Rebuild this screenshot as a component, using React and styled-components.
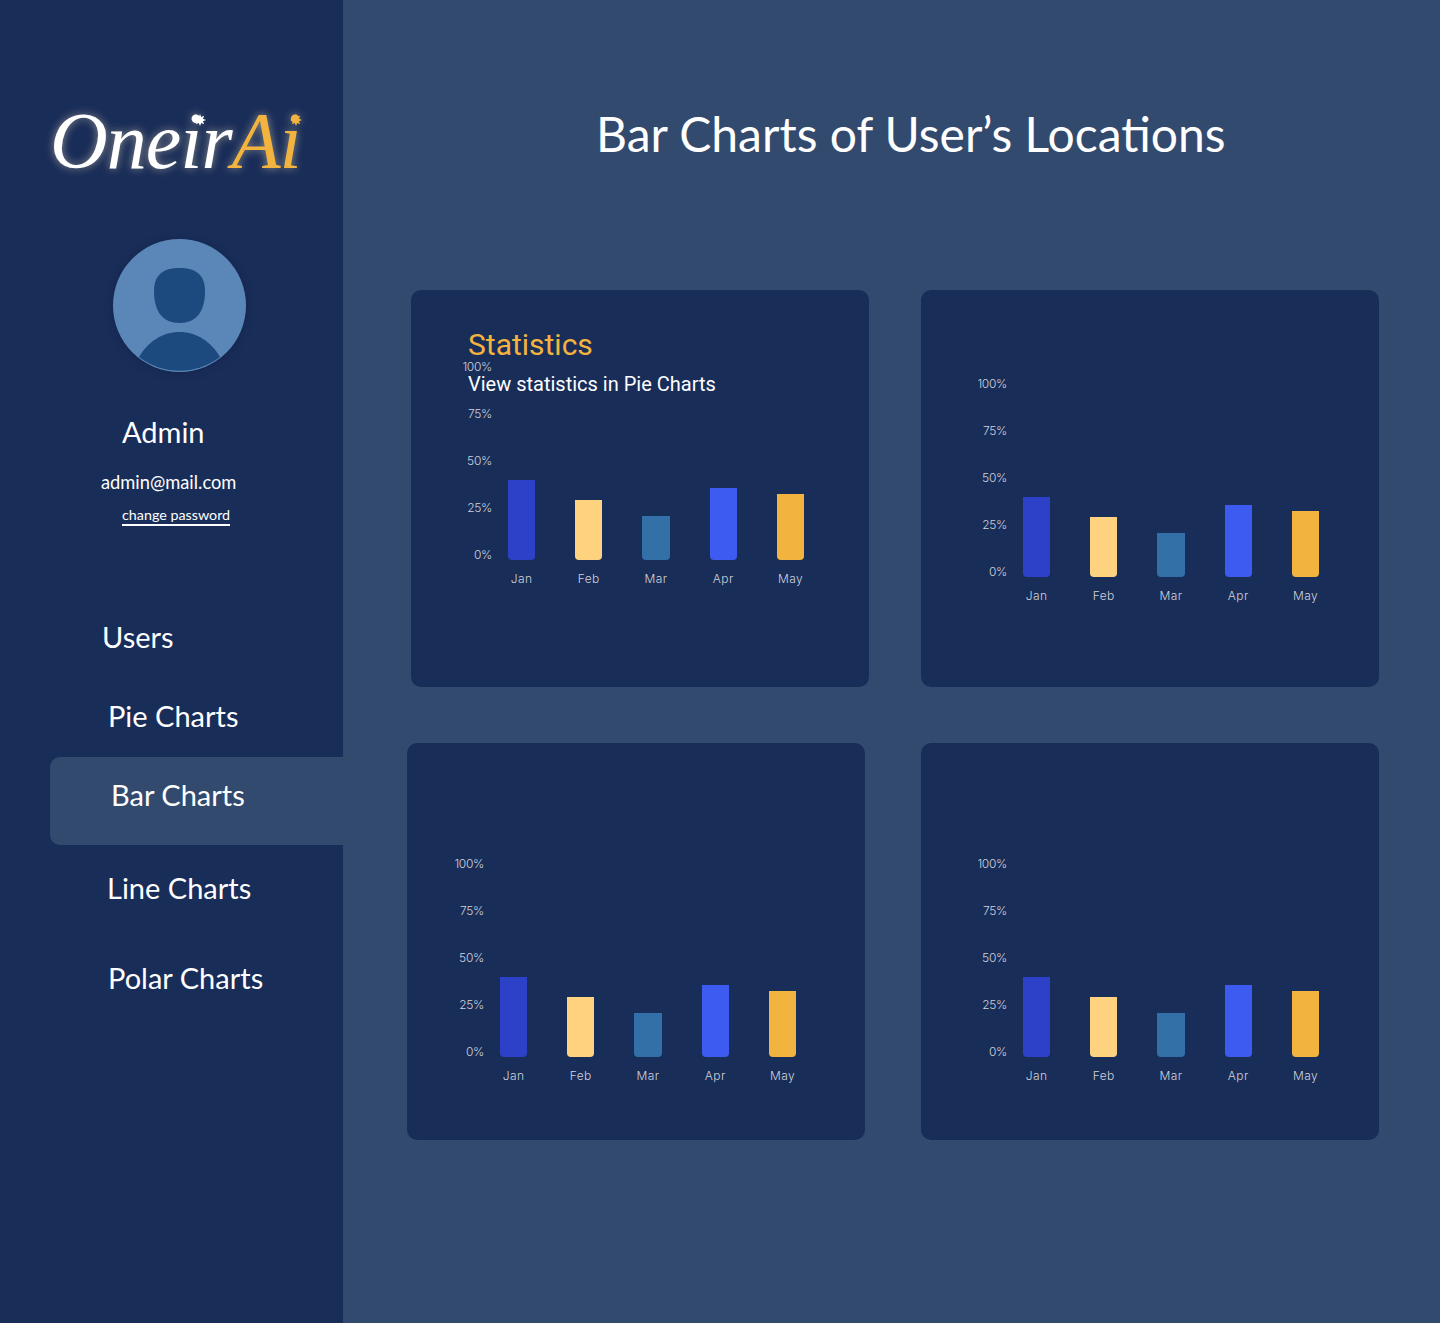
import React from 'react'
import styled, { createGlobalStyle } from 'styled-components'

const GlobalStyle = createGlobalStyle`
  html, body {
    margin: 0;
    padding: 0;
    background: #fff;
  }
  * {
    box-sizing: border-box;
  }
`

const display = `"Lato", "Open Sans", sans-serif`

const NAV = [
  { label: 'Users', left: 102, top: 89, height: 44 },
  { label: 'Pie Charts', left: 108, top: 35, height: 44 },
  { label: 'Bar Charts', left: 61, top: 19, height: 88, active: true },
  { label: 'Line Charts', left: 107, top: 21, height: 44 },
  { label: 'Polar Charts', left: 108, top: 46, height: 44 },
]

const BARS = [
  { month: 'Jan', value: 80, color: '#2c41c7' },
  { month: 'Feb', value: 60, color: '#ffd27f' },
  { month: 'Mar', value: 44, color: '#3470a8' },
  { month: 'Apr', value: 72, color: '#3d5af1' },
  { month: 'May', value: 66, color: '#f3b33f' },
]

const TICKS = ['100%', '75%', '50%', '25%', '0%']

const Star = ({ left, color }) => (
  <LogoStar $left={left} viewBox="0 0 12 12">
    <path
      d="M6 0l1.200 3.100L10.200 1.800 8.900 4.800 12 6 8.900 7.200 10.200 10.200 7.200 8.900 6 12 4.800 8.900 1.800 10.200 3.100 7.200 0 6 3.100 4.800 1.800 1.800 4.800 3.100z"
      fill={color}
    />
  </LogoStar>
)

const Chart = () => (
  <ChartRow>
    <Axis>
      {TICKS.map((t) => (
        <Tick key={t}>{t}</Tick>
      ))}
    </Axis>
    <Plot>
      {BARS.map((b) => (
        <BarColumn key={b.month}>
          <BarTrack>
            <Bar $height={b.value} $color={b.color} />
          </BarTrack>
          <Month>{b.month}</Month>
        </BarColumn>
      ))}
    </Plot>
  </ChartRow>
)

const App = () => {
  return (
    <Page>
      <GlobalStyle />
      <Sidebar>
        <Logo>
          <span>Oneir</span>
          <LogoAccent>Ai</LogoAccent>
          <Star left={144} color="#fff" />
          <Star left={240} color="#f3b33f" />
        </Logo>
        <Avatar viewBox="0 0 133 133">
          <circle cx="66.5" cy="66.5" r="66.5" fill="#5b87b8" />
          <path d="M41 52c0-16 9-23 25.500-23S92 36 92 52c0 21-9 32-25.500 32S41 73 41 52z" fill="#1d4a7e" />
          <path d="M26 118c9-15 23-25 40.500-25s31.500 10 40.500 25a66.500 66.500 0 0 1-81 0z" fill="#1d4a7e" />
        </Avatar>
        <ProfileName>Admin</ProfileName>
        <ProfileMail>admin@mail.com</ProfileMail>
        <ChangePassword>change password</ChangePassword>
        <nav>
          {NAV.map((n) => (
            <NavItem key={n.label} $left={n.left} $top={n.top} $height={n.height} $active={n.active}>
              <NavLabel $active={n.active}>{n.label}</NavLabel>
            </NavItem>
          ))}
        </nav>
      </Sidebar>
      <Main>
        <Title>Bar Charts of User’s Locations</Title>
        <CardRow $left={68} $gap={52}>
          <Card $left={36} $top={68}>
            <CardHeading>
              <CardTitle>Statistics</CardTitle>
              <CardSub>View statistics in Pie Charts</CardSub>
            </CardHeading>
            <Chart />
          </Card>
          <Card $left={41} $top={85}>
            <Chart />
          </Card>
        </CardRow>
        <CardRow $left={64} $gap={56} $top={56}>
          <Card $left={32} $top={112}>
            <Chart />
          </Card>
          <Card $left={41} $top={112}>
            <Chart />
          </Card>
        </CardRow>
      </Main>
    </Page>
  )
}

export default App

const Page = styled.div`
  display: flex;
  width: 1440px;
  height: 1323px;
  background: #334a6f;
  overflow: hidden;
`

const Sidebar = styled.aside`
  width: 343px;
  flex-shrink: 0;
  background: #192d59;
  color: #fff;
  font-family: ${display};
`

const Logo = styled.div`
  position: relative;
  margin: 101px 0 0 50px;
  height: 80px;
  font-family: "Liberation Serif", serif;
  font-style: italic;
  font-size: 80px;
  line-height: 80px;
  letter-spacing: -1px;
  white-space: nowrap;
  color: #fff;
  text-shadow: 0 0 8px rgba(255, 235, 190, 0.55);
`

const LogoAccent = styled.span`
  color: #f3b33f;
`

const LogoStar = styled.svg`
  position: absolute;
  top: 13px;
  left: ${(p) => p.$left}px;
  width: 12px;
  height: 12px;
`

const Avatar = styled.svg`
  display: block;
  width: 133px;
  height: 133px;
  margin: 58px 0 0 113px;
  filter: drop-shadow(0 1px 4px rgba(10, 20, 50, 0.35));
`

const ProfileName = styled.div`
  margin: 40px 0 0 122px;
  font-size: 29px;
  line-height: 40px;
`

const ProfileMail = styled.div`
  margin: 18px 0 0 101px;
  font-size: 18.3px;
  line-height: 24px;
`

const ChangePassword = styled.div`
  width: 108px;
  margin: 11px 0 0 122px;
  font-size: 14.3px;
  line-height: 19px;
  border-bottom: 2px solid #fff;
  white-space: nowrap;
`

const NavItem = styled.div`
  display: flex;
  margin-top: ${(p) => p.$top}px;
  margin-left: ${(p) => (p.$active ? 50 : p.$left)}px;
  padding-left: ${(p) => (p.$active ? p.$left : 0)}px;
  height: ${(p) => p.$height}px;
  border-radius: 10px 0 0 10px;
  background: ${(p) => (p.$active ? '#334a6f' : 'transparent')};
`

const NavLabel = styled.span`
  font-size: 29px;
  line-height: 44px;
  margin-top: ${(p) => (p.$active ? 16 : 0)}px;
  white-space: nowrap;
`

const Main = styled.main`
  flex: 1;
  min-width: 0;
`

const Title = styled.h1`
  margin: 0;
  height: 290px;
  padding: 100px 0 0 253px;
  font-family: ${display};
  font-weight: 400;
  font-size: 48px;
  line-height: 68px;
  color: #fff;
  white-space: nowrap;
`

const CardRow = styled.div`
  display: flex;
  gap: ${(p) => p.$gap}px;
  margin-left: ${(p) => p.$left}px;
  margin-top: ${(p) => p.$top || 0}px;
`

const Card = styled.section`
  position: relative;
  width: 458px;
  height: 397px;
  padding: ${(p) => p.$top}px 0 0 ${(p) => p.$left}px;
  border-radius: 10px;
  background: #192d59;
`

const CardHeading = styled.div`
  position: absolute;
  top: 37px;
  left: 57px;
  font-family: "Roboto", sans-serif;
`

const CardTitle = styled.h2`
  margin: 0;
  font-weight: 400;
  font-size: 30px;
  line-height: 36px;
  color: #f3b33f;
`

const CardSub = styled.p`
  margin: 9px 0 0;
  font-size: 20px;
  line-height: 24px;
  color: #fff;
`

const ChartRow = styled.div`
  display: flex;
  gap: 15.9px;
  font-family: "Inter", sans-serif;
  font-weight: 300;
  font-size: 12px;
  line-height: 18px;
  color: #cfd2db;
`

const Axis = styled.div`
  display: flex;
  flex-direction: column;
  gap: 29px;
  width: 45px;
  text-align: right;
  letter-spacing: -0.3px;
`

const Tick = styled.span`
  display: block;
`

const Plot = styled.div`
  display: flex;
  gap: 40px;
`

const BarColumn = styled.div`
  display: flex;
  flex-direction: column;
  align-items: center;
  width: 27.25px;
`

const BarTrack = styled.div`
  display: flex;
  align-items: flex-end;
  width: 100%;
  height: 202px;
`

const Bar = styled.div`
  width: 100%;
  height: ${(p) => p.$height}px;
  border-radius: 0 0 4px 4px;
  background: ${(p) => p.$color};
`

const Month = styled.span`
  margin-top: 10px;
  letter-spacing: 0.4px;
  white-space: nowrap;
`
